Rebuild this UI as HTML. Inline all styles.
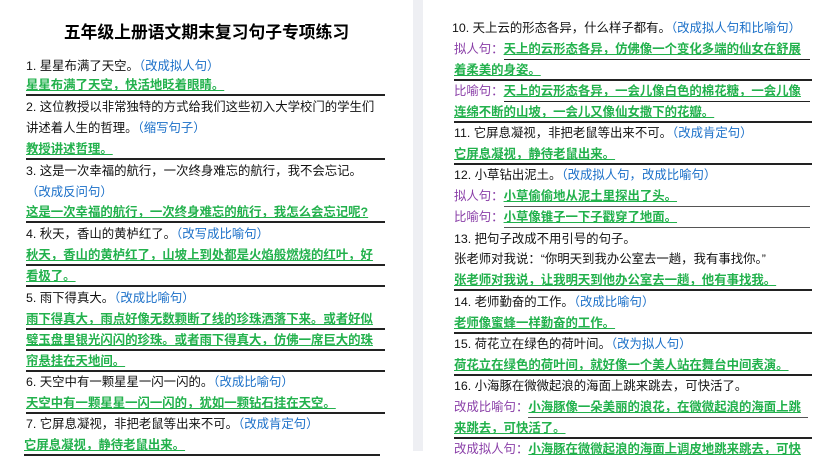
<!DOCTYPE html>
<html><head><meta charset="utf-8"><style>
*{margin:0;padding:0;box-sizing:border-box}
body{width:837px;height:451px;overflow:hidden;background:#fff;position:relative;font-family:"Liberation Sans","Noto Sans CJK SC",sans-serif;font-size:12.4px;color:#111}
.sep{position:absolute;left:413px;top:0;width:10px;height:451px;background:#eeeff3}
.t{position:absolute;left:0;width:413px;top:21px;text-align:center;font-size:16.8px;font-weight:bold;color:#000;line-height:24px}
.ln{position:absolute;height:21px;line-height:21px;white-space:nowrap;overflow:hidden}
.L{left:26px;width:359px}
.R{left:454px;width:358px}
.a{border-bottom:2px solid #222}
.g{color:#22b14c;font-weight:bold;text-decoration:underline}
.b{color:#1a6fc8}
.p{color:#8a3fa8}
</style></head><body>
<div class="sep"></div>
<div class="t">五年级上册语文期末复习句子专项练习</div>

<div class="ln L" style="top:56px">1. 星星布满了天空。<span class="b">（改成拟人句）</span></div>
<div class="ln L a" style="top:75px"><span class="g">星星布满了天空，快活地眨着眼睛。</span></div>
<div class="ln L" style="top:97px">2. 这位教授以非常独特的方式给我们这些初入大学校门的学生们</div>
<div class="ln L" style="top:118px">讲述着人生的哲理。<span class="b">（缩写句子）</span></div>
<div class="ln L a" style="top:139px"><span class="g">教授讲述哲理。</span></div>
<div class="ln L" style="top:161px">3. 这是一次幸福的航行，一次终身难忘的航行，我不会忘记。</div>
<div class="ln L" style="top:182px"><span class="b">（改成反问句）</span></div>
<div class="ln L a" style="top:202px"><span class="g">这是一次幸福的航行，一次终身难忘的航行，我怎么会忘记呢?</span></div>
<div class="ln L" style="top:224px">4. 秋天，香山的黄栌红了。<span class="b">（改写成比喻句）</span></div>
<div class="ln L a" style="top:245px"><span class="g">秋天，香山的黄栌红了，山坡上到处都是火焰般燃烧的红叶，好</span></div>
<div class="ln L a" style="top:266px"><span class="g">看极了。</span></div>
<div class="ln L" style="top:288px">5. 雨下得真大。<span class="b">（改成比喻句）</span></div>
<div class="ln L a" style="top:309px"><span class="g">雨下得真大，雨点好像无数颗断了线的珍珠洒落下来。或者好似</span></div>
<div class="ln L a" style="top:330px"><span class="g">璧玉盘里银光闪闪的珍珠。或者雨下得真大，仿佛一席巨大的珠</span></div>
<div class="ln L a" style="top:351px"><span class="g">帘悬挂在天地间。</span></div>
<div class="ln L" style="top:372px">6. 天空中有一颗星星一闪一闪的。<span class="b">（改成比喻句）</span></div>
<div class="ln L a" style="top:393px"><span class="g">天空中有一颗星星一闪一闪的，犹如一颗钻石挂在天空。</span></div>
<div class="ln L" style="top:414px">7. 它屏息凝视，非把老鼠等出来不可。<span class="b">（改成肯定句）</span></div>
<div class="ln a" style="top:435px;left:24px;width:356px"><span class="g">它屏息凝视，静待老鼠出来。</span></div>

<div class="ln R" style="top:18px;left:452px">10. 天上云的形态各异，什么样子都有。<span class="b">（改成拟人句和比喻句）</span></div>
<div class="ln R" style="top:39px"><span class="p">拟人句：</span><span class="g" style="display:inline-block;border-bottom:2px solid #222;width:306px;line-height:19px">天上的云形态各异，仿佛像一个变化多端的仙女在舒展</span></div>
<div class="ln R a" style="top:60px"><span class="g">着柔美的身姿。</span></div>
<div class="ln R" style="top:81px"><span class="p">比喻句：</span><span class="g" style="display:inline-block;border-bottom:2px solid #222;width:306px;line-height:19px">天上的云形态各异，一会儿像白色的棉花糖，一会儿像</span></div>
<div class="ln R a" style="top:102px"><span class="g">连绵不断的山坡，一会儿又像仙女撒下的花瓣。</span></div>
<div class="ln R" style="top:123px">11. 它屏息凝视，非把老鼠等出来不可。<span class="b">（改成肯定句）</span></div>
<div class="ln R a" style="top:144px"><span class="g">它屏息凝视，静待老鼠出来。</span></div>
<div class="ln R" style="top:165px">12. 小草钻出泥土。<span class="b">（改成拟人句，改成比喻句）</span></div>
<div class="ln R" style="top:186px"><span class="p">拟人句：</span><span class="g" style="display:inline-block;border-bottom:2px solid #555;width:306px;line-height:19px">小草偷偷地从泥土里探出了头。</span></div>
<div class="ln R" style="top:207px"><span class="p">比喻句：</span><span class="g" style="display:inline-block;border-bottom:2px solid #555;width:306px;line-height:19px">小草像锥子一下子戳穿了地面。</span></div>
<div class="ln R" style="top:229px">13. 把句子改成不用引号的句子。</div>
<div class="ln R" style="top:249px">张老师对我说：“你明天到我办公室去一趟，我有事找你。”</div>
<div class="ln R a" style="top:270px"><span class="g">张老师对我说，让我明天到他办公室去一趟，他有事找我。</span></div>
<div class="ln R" style="top:292px">14. 老师勤奋的工作。<span class="b">（改成比喻句）</span></div>
<div class="ln R a" style="top:313px"><span class="g">老师像蜜蜂一样勤奋的工作。</span></div>
<div class="ln R" style="top:334px">15. 荷花立在绿色的荷叶间。<span class="b">（改为拟人句）</span></div>
<div class="ln R a" style="top:355px"><span class="g">荷花立在绿色的荷叶间，就好像一个美人站在舞台中间表演。</span></div>
<div class="ln R" style="top:376px">16. 小海豚在微微起浪的海面上跳来跳去，可快活了。</div>
<div class="ln R" style="top:397px"><span class="p">改成比喻句：</span><span class="g" style="display:inline-block;border-bottom:2px solid #555;width:280px;line-height:19px">小海豚像一朵美丽的浪花，在微微起浪的海面上跳</span></div>
<div class="ln R a" style="top:418px"><span class="g">来跳去，可快活了。</span></div>
<div class="ln R" style="top:439px"><span class="p">改成拟人句：</span><span class="g">小海豚在微微起浪的海面上调皮地跳来跳去，可快</span></div>
</body></html>
